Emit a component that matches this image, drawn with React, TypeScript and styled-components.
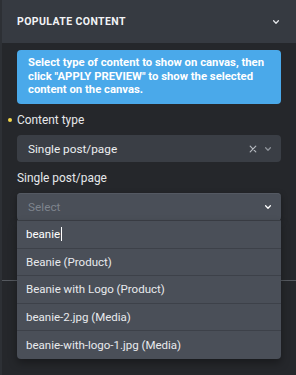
import styled, { createGlobalStyle } from "styled-components";

const GlobalStyle = createGlobalStyle`
  html, body {
    margin: 0;
    padding: 0;
    background: #25272b;
  }
  body {
    font-family: Roboto, Inter, "Liberation Sans", sans-serif;
    -webkit-font-smoothing: antialiased;
  }
`;

const options = [
  "Beanie (Product)",
  "Beanie with Logo (Product)",
  "beanie-2.jpg (Media)",
  "beanie-with-logo-1.jpg (Media)",
];

const Chevron = ({ color = "#c9ccd1", size = 8 }: { color?: string; size?: number }) => (
  <svg width={size} height={size} viewBox="0 0 10 10" fill="none">
    <path d="M2 3.5 5 6.5 8 3.5" stroke={color} strokeWidth="1.6" strokeLinecap="round" strokeLinejoin="round" />
  </svg>
);

const Cross = () => (
  <svg width="8" height="8" viewBox="0 0 10 10" fill="none">
    <path d="M1.5 1.5 8.5 8.5M8.5 1.5 1.5 8.5" stroke="#b4b8be" strokeWidth="1.5" strokeLinecap="round" />
  </svg>
);

const App = () => {
  return (
    <>
      <GlobalStyle />
      <StyledPanel>
        <StyledHeader>
          <StyledHeaderTitle>Populate Content</StyledHeaderTitle>
          <Chevron color="#e4e6ea" />
        </StyledHeader>
        <StyledBody>
          <StyledInfo>
            Select type of content to show on canvas, then click "APPLY PREVIEW" to show the selected
            content on the canvas.
          </StyledInfo>
          <StyledControl>
            <StyledLabel $dot>Content type</StyledLabel>
            <StyledSelect>
              <StyledValue>Single post/page</StyledValue>
              <StyledIcons>
                <Cross />
                <Chevron color="#8e939a" />
              </StyledIcons>
            </StyledSelect>
          </StyledControl>
          <StyledControl>
            <StyledLabel>Single post/page</StyledLabel>
            <StyledDropdown>
              <StyledTrigger>
                <StyledPlaceholder>Select</StyledPlaceholder>
                <Chevron color="#ffffff" />
              </StyledTrigger>
              <StyledMenu>
                <StyledSearch>
                  beanie<StyledCaret />
                </StyledSearch>
                {options.map((o) => (
                  <StyledOption key={o}>{o}</StyledOption>
                ))}
              </StyledMenu>
            </StyledDropdown>
          </StyledControl>
        </StyledBody>
        <StyledNextSection />
      </StyledPanel>
    </>
  );
};

export default App;

const StyledPanel = styled.div`
  width: 296px;
  height: 375px;
  overflow: hidden;
  display: flex;
  flex-direction: column;
  background: #25272b;
  border-left: 2px solid #2d3035;
  box-sizing: border-box;
`;

const StyledHeader = styled.div`
  height: 43px;
  flex-shrink: 0;
  display: flex;
  align-items: center;
  justify-content: space-between;
  padding: 0 16px 0 15px;
  background: #363a41;
`;

const StyledHeaderTitle = styled.h2`
  margin: 0;
  color: #f2f3f5;
  font-size: 10.5px;
  font-weight: 700;
  letter-spacing: 0.4px;
  text-transform: uppercase;
`;

const StyledBody = styled.div`
  display: flex;
  flex-direction: column;
  gap: 8.5px;
  padding: 7px 15px 0;
  height: 237px;
  box-sizing: border-box;
  flex-shrink: 0;
`;

const StyledInfo = styled.div`
  height: 54px;
  flex-shrink: 0;
  box-sizing: border-box;
  padding: 6px 6px 0 11px;
  border-radius: 4px;
  background: #4aa9ea;
  color: #ffffff;
  font-size: 11.3px;
  font-weight: 700;
  line-height: 13.6px;
`;

const StyledControl = styled.div`
  display: flex;
  flex-direction: column;
  gap: 8.5px;
  position: relative;
`;

const StyledLabel = styled.div<{ $dot?: boolean }>`
  position: relative;
  color: #e6e7ea;
  font-size: 11.9px;
  line-height: 14px;

  &::before {
    content: "";
    display: ${(p) => (p.$dot ? "block" : "none")};
    position: absolute;
    left: -9px;
    top: 5px;
    width: 4px;
    height: 4px;
    border-radius: 50%;
    background: #f3d54a;
  }
`;

const StyledSelect = styled.div`
  height: 27px;
  display: flex;
  align-items: center;
  justify-content: space-between;
  padding: 0 9px 0 11px;
  border-radius: 4px;
  background: #3a3e45;
`;

const StyledValue = styled.span`
  color: #eceef0;
  font-size: 11.8px;
`;

const StyledIcons = styled.span`
  display: flex;
  align-items: center;
  gap: 7px;
`;

const StyledDropdown = styled.div`
  position: relative;
  border-radius: 4px;
  background: #4a4f58;
  box-shadow: 0 2px 6px rgba(0, 0, 0, 0.35);
`;

const StyledTrigger = styled.div`
  height: 28px;
  box-sizing: border-box;
  display: flex;
  align-items: center;
  justify-content: space-between;
  padding: 0 9px 0 11px;
  border-bottom: 1px solid #3b3f46;
  border-top: 1px solid #545962;
  border-radius: 4px 4px 0 0;
`;

const StyledPlaceholder = styled.span`
  color: #7e848d;
  font-size: 11.8px;
`;

const StyledMenu = styled.div`
  position: absolute;
  top: 28px;
  left: 0;
  right: 0;
  background: #4a4f58;
  border-radius: 0 0 4px 4px;
  box-shadow: 0 4px 8px rgba(0, 0, 0, 0.35);
  z-index: 2;
`;

const StyledRow = styled.div`
  height: 27.5px;
  box-sizing: border-box;
  display: flex;
  align-items: center;
  padding: 0 9px;
  color: #e8eaed;
  font-size: 11.5px;
  border-bottom: 1px solid #3d4149;

  &:last-child {
    border-bottom: none;
  }
`;

const StyledSearch = styled(StyledRow)`
  color: #ffffff;
`;

const StyledCaret = styled.span`
  display: inline-block;
  width: 1px;
  height: 14px;
  margin-left: 0.5px;
  background: #ffffff;
`;

const StyledOption = styled(StyledRow)``;

const StyledNextSection = styled.div`
  flex: 1;
  border-top: 1px solid #55595f;
`;
